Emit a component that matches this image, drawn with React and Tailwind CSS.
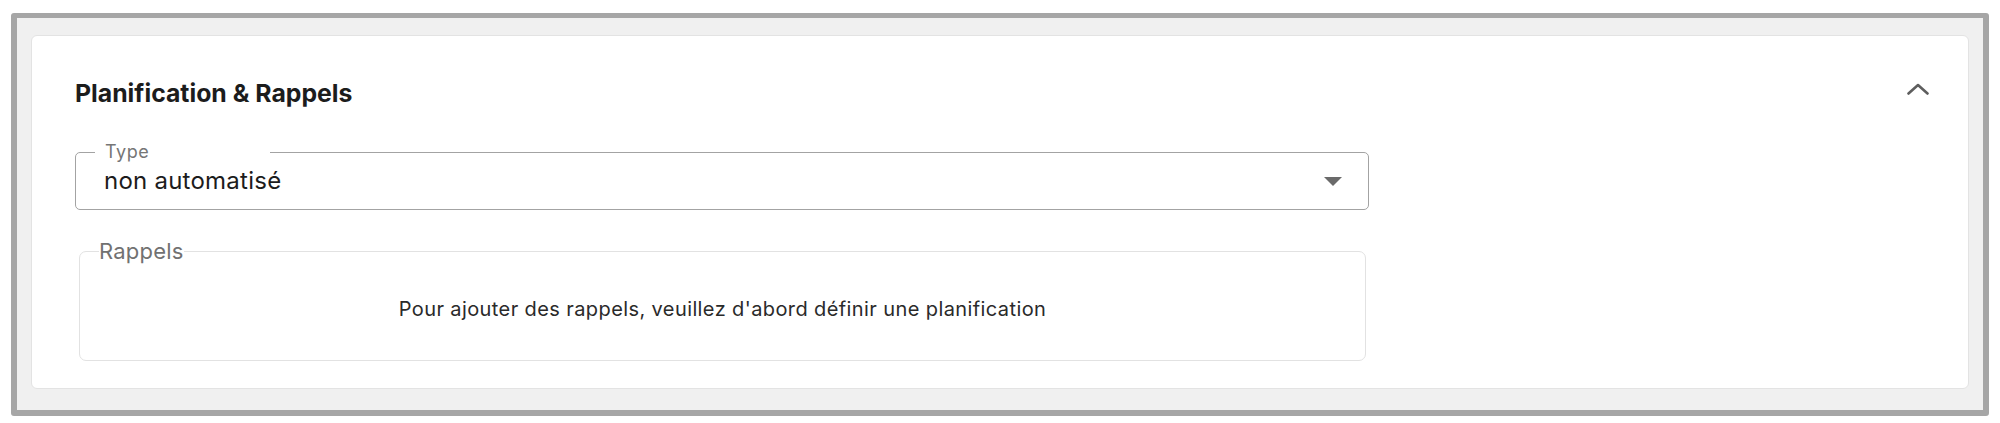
import React from "react";

export default function App() {
  return (
    <div
      className="w-[2000px] h-[423px] bg-white pt-[13px] px-[11px]"
      style={{ fontFamily: "Inter, 'Noto Sans', sans-serif" }}
    >
      <div className="h-[403px] border-[6px] border-t-[5px] border-[#a6a6a6] rounded-[3px] bg-[#f0f0f0] pt-[17px] px-[14px]">
        <div className="h-[354px] bg-white border border-[#e3e3e3] rounded-[6px] pl-[43px] pr-[39px] pt-[42px]">
          <div className="flex items-start justify-between">
            <h2 className="text-[24.8px] leading-[31px] font-bold text-[#1c1c1c]">
              Planification &amp; Rappels
            </h2>
            <svg
              width="22"
              height="12"
              viewBox="0 0 22 12"
              className="mt-[5px]"
              fill="none"
            >
              <polyline
                points="1.5,10.5 11,2 20.5,10.5"
                stroke="#5e5e5e"
                strokeWidth="2.6"
                strokeLinecap="round"
                strokeLinejoin="round"
              />
            </svg>
          </div>

          <div className="relative mt-[43px] w-[1294px] h-[58px] border border-[#a3a3a3] rounded-[5px] flex items-center justify-between pl-[28px] pr-[26px]">
            <span className="absolute left-[19px] -top-[12px] w-[175px] bg-white pl-[10px] text-[18px] leading-[22px] tracking-[0.03em] text-[#767676]">
              Type
            </span>
            <span className="text-[24px] leading-[28px] tracking-[0.01em] text-[#1c1c1c]">
              non automatisé
            </span>
            <svg width="18" height="9" viewBox="0 0 18 9">
              <polygon points="0,0 18,0 9,9" fill="#6a6a6a" />
            </svg>
          </div>

          <div className="relative mt-[41px] ml-[4px] w-[1287px] h-[110px] border border-[#e2e2e2] rounded-[7px] flex items-center justify-center pt-[6px]">
            <span className="absolute left-[19px] -top-[14px] bg-white text-[22px] leading-[27px] tracking-[0.01em] text-[#717171]">
              Rappels
            </span>
            <p className="text-[20px] leading-[24px] tracking-[0.02em] text-[#2a2a2a]">
              Pour ajouter des rappels, veuillez d'abord définir une planification
            </p>
          </div>
        </div>
      </div>
    </div>
  );
}
